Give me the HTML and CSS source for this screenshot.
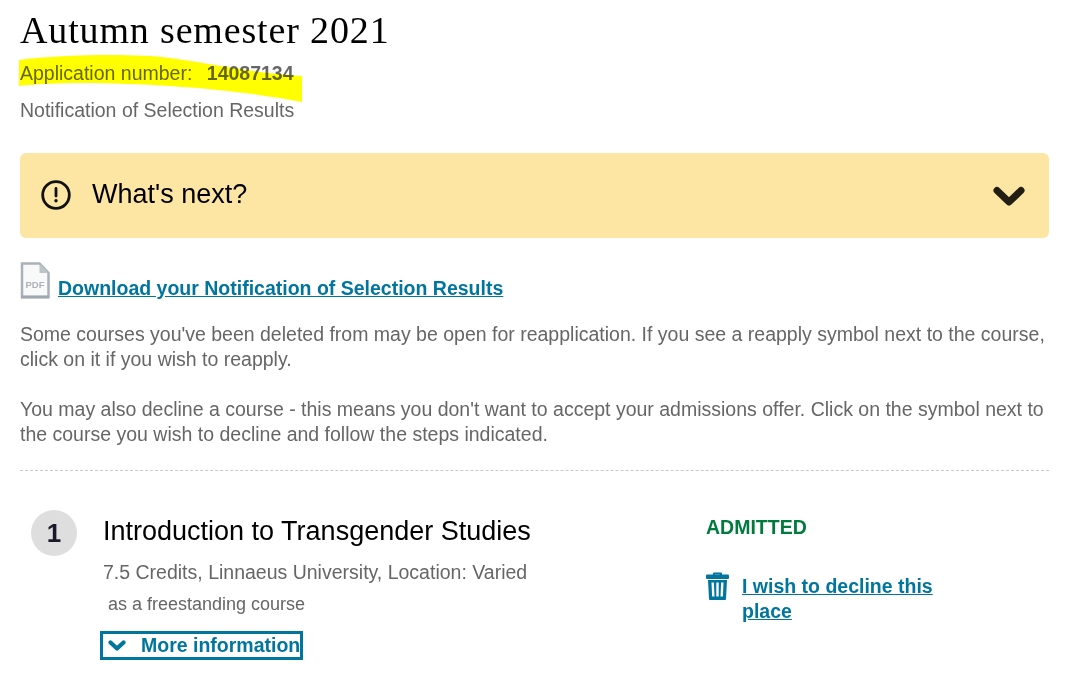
FILE: index.html
```html
<!DOCTYPE html>
<html lang="en">
<head>
<meta charset="utf-8">
<title>Autumn semester 2021</title>
<link rel="stylesheet" href="styles.css">
</head>
<body>
<main class="page">
  <h1 class="title">Autumn semester 2021</h1>
  <p class="appnum">Application number: <b class="appnum-value">14087134</b></p>
  <p class="subtitle">Notification of Selection Results</p>

  <section class="banner">
    <svg class="banner-icon" viewBox="0 0 30 30" aria-hidden="true">
      <circle cx="15" cy="15" r="13.300" fill="none" stroke="#111" stroke-width="2.800"/>
      <path d="M15 8.500v7.500" stroke="#111" stroke-width="2.800" stroke-linecap="round"/>
      <circle cx="15" cy="20.800" r="1.700" fill="#111"/>
    </svg>
    <span class="banner-text">What's next?</span>
    <svg class="banner-chevron" viewBox="0 0 32 20" aria-hidden="true">
      <path d="M4 4.500l12 11.500L28 4.500" fill="none" stroke="#221e14" stroke-width="7" stroke-linecap="round" stroke-linejoin="round"/>
    </svg>
  </section>

  <div class="download">
    <svg class="pdf-icon" viewBox="0 0 30 37" aria-hidden="true">
      <path d="M2 1.500h17.500L28.500 11v24H2z" fill="#f8f9f9" stroke="#a9b2b8" stroke-width="2.500"/>
      <path d="M19.500 1.500V11h9z" fill="#bcc4c9"/>
      <rect x="1" y="33.500" width="28" height="3" fill="#a0a9af"/>
      <text x="15" y="26" class="pdf-label" text-anchor="middle">PDF</text>
    </svg>
    <a class="link download-link" href="#">Download your Notification of Selection Results</a>
  </div>

  <p class="para">Some courses you've been deleted from may be open for reapplication. If you see a reapply symbol next to the course, click on it if you wish to reapply.</p>
  <p class="para para-second">You may also decline a course - this means you don't want to accept your admissions offer. Click on the symbol next to the course you wish to decline and follow the steps indicated.</p>

  <hr class="rule">

  <article class="course">
    <div class="course-num">1</div>
    <div class="course-main">
      <h2 class="course-title">Introduction to Transgender Studies</h2>
      <p class="course-meta">7.5 Credits, Linnaeus University, Location: Varied</p>
      <p class="course-kind">as a freestanding course</p>
      <a class="more" href="#">
        <svg class="more-chevron" viewBox="0 0 18 11" aria-hidden="true">
          <path d="M2.500 2.500L9 8.500l6.500-6" fill="none" stroke="#00759d" stroke-width="4.200" stroke-linecap="round" stroke-linejoin="round"/>
        </svg>
        More information
      </a>
    </div>
    <div class="course-side">
      <div class="status">ADMITTED</div>
      <div class="decline">
        <svg class="trash" viewBox="0 0 23 28" aria-hidden="true">
          <path d="M8 3.500V1.500h7v2" fill="none" stroke="#00759d" stroke-width="2" stroke-linejoin="round"/>
          <rect x="0" y="2.500" width="23" height="4.500" rx="1" fill="#00759d"/>
          <path d="M2 8h19l-1 19a1 1 0 0 1-1 1H4a1 1 0 0 1-1-1z" fill="#00759d"/>
          <path d="M6.700 10.500l.6 14M11.500 10.500v14M16.300 10.500l-.6 14" stroke="#fff" stroke-width="2.400"/>
        </svg>
        <a class="link decline-link" href="#">I wish to decline this place</a>
      </div>
    </div>
  </article>
</main>
<svg class="marker" viewBox="0 0 1069 674" aria-hidden="true">
  <path d="M19 60C60 55 130 53 170 58S250 73 302 76V102C270 96 230 90 170 86C120 83 60 81 19 86Z" fill="#ffff00"/>
</svg>
</body>
</html>
```

FILE: styles.css
```css
html, body {
  margin: 0;
  padding: 0;
  background: #fff;
  overflow: hidden;
}
body {
  height: 674px;
  font-family: "Liberation Sans", Arial, sans-serif;
  color: #666;
  font-size: 19.5px;
  position: relative;
}
.page {
  padding: 0 20px;
}
.title {
  margin: 0;
  padding-top: 10px;
  font-family: "Liberation Serif", Georgia, serif;
  font-weight: 400;
  font-size: 38px;
  line-height: 41px;
  color: #000;
  letter-spacing: 0.85px;
  font-variant-numeric: oldstyle-nums;
}
.appnum {
  margin: 11px 0 0;
  line-height: 22px;
}
.appnum-value {
  margin-left: 9px;
}
.subtitle {
  margin: 15px 0 0;
  line-height: 22px;
}
.banner {
  margin-top: 32px;
  height: 85px;
  box-sizing: border-box;
  background: #fde6a3;
  border-radius: 6px;
  display: flex;
  align-items: center;
  padding: 0 24px 2px 21px;
}
.banner-icon {
  width: 30px;
  height: 30px;
  flex: none;
}
.banner-text {
  margin-left: 21px;
  font-size: 27px;
  color: #000;
  flex: 1;
}
.banner-chevron {
  width: 32px;
  height: 20px;
  margin-top: 2px;
  flex: none;
}
.download {
  margin-top: 24px;
  display: flex;
  align-items: flex-end;
}
.pdf-icon {
  width: 30px;
  height: 37px;
  flex: none;
}
.pdf-label {
  font-family: "Liberation Sans", Arial, sans-serif;
  font-size: 9.500px;
  font-weight: 700;
  fill: #adb3b7;
}
.link {
  color: #00759d;
  font-weight: 700;
  text-decoration: underline;
  font-size: 19.500px;
}
.download-link {
  margin-left: 8px;
  line-height: 24px;
  position: relative;
  top: 1px;
}
.para {
  margin: 23px 0 0;
  line-height: 25px;
}
.para-second {
  margin-top: 25px;
}
.rule {
  margin: 23px 0 0;
  border: 0;
  border-top: 1px dashed #c8c8c8;
}
.course {
  display: flex;
  margin-top: 40px;
  align-items: flex-start;
}
.course-num {
  margin: -1px 0 0 11px;
  width: 46px;
  height: 46px;
  border-radius: 50%;
  background: #dedede;
  color: #1a1a2a;
  font-weight: 700;
  font-size: 26px;
  display: flex;
  align-items: center;
  justify-content: center;
  flex: none;
}
.course-main {
  margin-left: 26px;
  width: 603px;
  flex: none;
}
.course-title {
  margin: 0;
  font-weight: 400;
  font-size: 27px;
  line-height: 40px;
  color: #000;
}
.course-meta {
  margin: 9px 0 0;
  line-height: 24px;
}
.course-kind {
  margin: 8px 0 0 5px;
  font-size: 18px;
  line-height: 24px;
}
.more {
  margin: 15px 0 0 -3px;
  display: inline-flex;
  align-items: center;
  height: 29px;
  box-sizing: border-box;
  border: 3px solid #00759d;
  color: #00759d;
  font-weight: 700;
  font-size: 19.500px;
  text-decoration: none;
  padding: 0 0 0 5px;
}
.more-chevron {
  width: 18px;
  height: 11px;
  margin-right: 15px;
  flex: none;
}
.course-side {
  margin-left: 0;
  width: 228px;
}
.status {
  color: #007a3d;
  font-weight: 700;
  font-size: 19.500px;
  line-height: 28px;
  margin-top: 2px;
}
.decline {
  margin-top: 33px;
  display: flex;
  align-items: flex-start;
}
.trash {
  margin-top: -2px;
  width: 23px;
  height: 28px;
  flex: none;
}
.decline-link {
  margin-left: 13px;
  line-height: 25px;
}
.marker {
  position: absolute;
  top: 0;
  left: 0;
  width: 1069px;
  height: 674px;
  mix-blend-mode: multiply;
  pointer-events: none;
}
```
